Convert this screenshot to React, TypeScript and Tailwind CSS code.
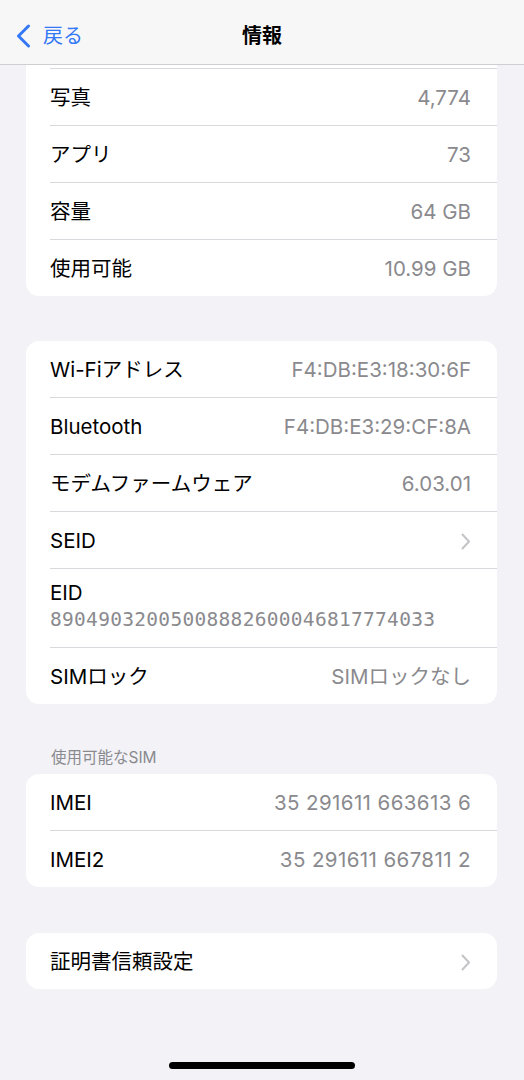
import React from "react";

const FONT = { fontFamily: '"Inter", "Noto Sans CJK JP", sans-serif' };

function Chevron() {
  return (
    <svg width="10" height="17" viewBox="0 0 10 17" className="shrink-0">
      <path d="M1.5 1.5 L8 8.5 L1.5 15.5" fill="none" stroke="#c4c4c7" strokeWidth="2" strokeLinecap="round" strokeLinejoin="round" />
    </svg>
  );
}

type RowProps = { label: string; value?: string; chevron?: boolean; last?: boolean; wide?: boolean };

function Row({ label, value, chevron, last, wide }: RowProps) {
  return (
    <div className="pl-[24px]">
      <div
        className={`flex items-center justify-between pr-[26px] pt-[2px] ${
          last ? "h-[56px]" : "h-[57px] border-b border-[#d9d9dd]"
        }`}
      >
        <span className="text-[20.5px] text-black">{label}</span>
        {value && (
          <span className={`text-[20.5px] text-[#8a8a8e] ${wide ? "tracking-[0.4px]" : "tracking-[0px]"}`}>{value}</span>
        )}
        {chevron && <Chevron />}
      </div>
    </div>
  );
}

function Card({ children, className = "" }: { children: React.ReactNode; className?: string }) {
  return <div className={`ml-[26px] mr-[27px] bg-white rounded-[13px] overflow-hidden ${className}`}>{children}</div>;
}

export default function App() {
  return (
    <div className="w-[524px] h-[1080px] bg-[#f2f2f7] relative overflow-hidden" style={FONT}>
      {/* Nav bar */}
      <div className="h-[65px] bg-[#f7f7f7] border-b border-[#cfcfd2] flex items-center relative">
        <div className="flex items-center pl-[16px] pt-[8px] gap-[12px]">
          <svg width="15" height="24" viewBox="0 0 15 24">
            <path d="M12.5 2 L2.5 12 L12.5 22" fill="none" stroke="#3478f6" strokeWidth="3" strokeLinecap="round" strokeLinejoin="round" />
          </svg>
          <span className="text-[20px] text-[#3478f6]">戻る</span>
        </div>
        <div className="absolute inset-x-0 top-[8px] bottom-0 flex items-center justify-center pointer-events-none">
          <span className="text-[20px] font-bold text-black">情報</span>
        </div>
      </div>

      {/* Card 1 (scrolled) */}
      <div className="ml-[26px] mr-[27px] bg-white rounded-b-[13px] overflow-hidden">
        <div className="pl-[24px]">
          <div className="h-[4px] border-b border-[#d9d9dd]" />
        </div>
        <Row label="写真" value="4,774" />
        <Row label="アプリ" value="73" />
        <Row label="容量" value="64 GB" />
        <Row label="使用可能" value="10.99 GB" last />
      </div>

      {/* Card 2 */}
      <Card className="mt-[45px]">
        <Row label="Wi-Fiアドレス" value="F4:DB:E3:18:30:6F" />
        <Row label="Bluetooth" value="F4:DB:E3:29:CF:8A" />
        <Row label="モデムファームウェア" value="6.03.01" />
        <Row label="SEID" chevron />
        <div className="pl-[24px]">
          <div className="pt-[11px] pb-[13px] border-b border-[#d9d9dd] pr-[26px]">
            <div className="text-[20.5px] leading-[26px] text-black">EID</div>
            <div
              className="text-[19.5px] leading-[28px] text-[#8a8a8e]"
              style={{ fontFamily: '"DejaVu Sans Mono", monospace', letterSpacing: "0.3px" }}
            >
              89049032005008882600046817774033
            </div>
          </div>
        </div>
        <Row label="SIMロック" value="SIMロックなし" last />
      </Card>

      {/* Section header */}
      <div className="pl-[51px] mt-[42px] h-[28px] text-[15.5px] leading-[24px] text-[#8a8a8e]">使用可能なSIM</div>

      {/* Card 3 */}
      <Card>
        <Row label="IMEI" value="35 291611 663613 6" wide />
        <Row label="IMEI2" value="35 291611 667811 2" wide last />
      </Card>

      {/* Card 4 */}
      <Card className="mt-[46px]">
        <Row label="証明書信頼設定" chevron last />
      </Card>

      {/* Home indicator */}
      <div className="absolute left-[169px] top-[1062px] w-[186px] h-[7px] rounded-full bg-black" />
    </div>
  );
}
